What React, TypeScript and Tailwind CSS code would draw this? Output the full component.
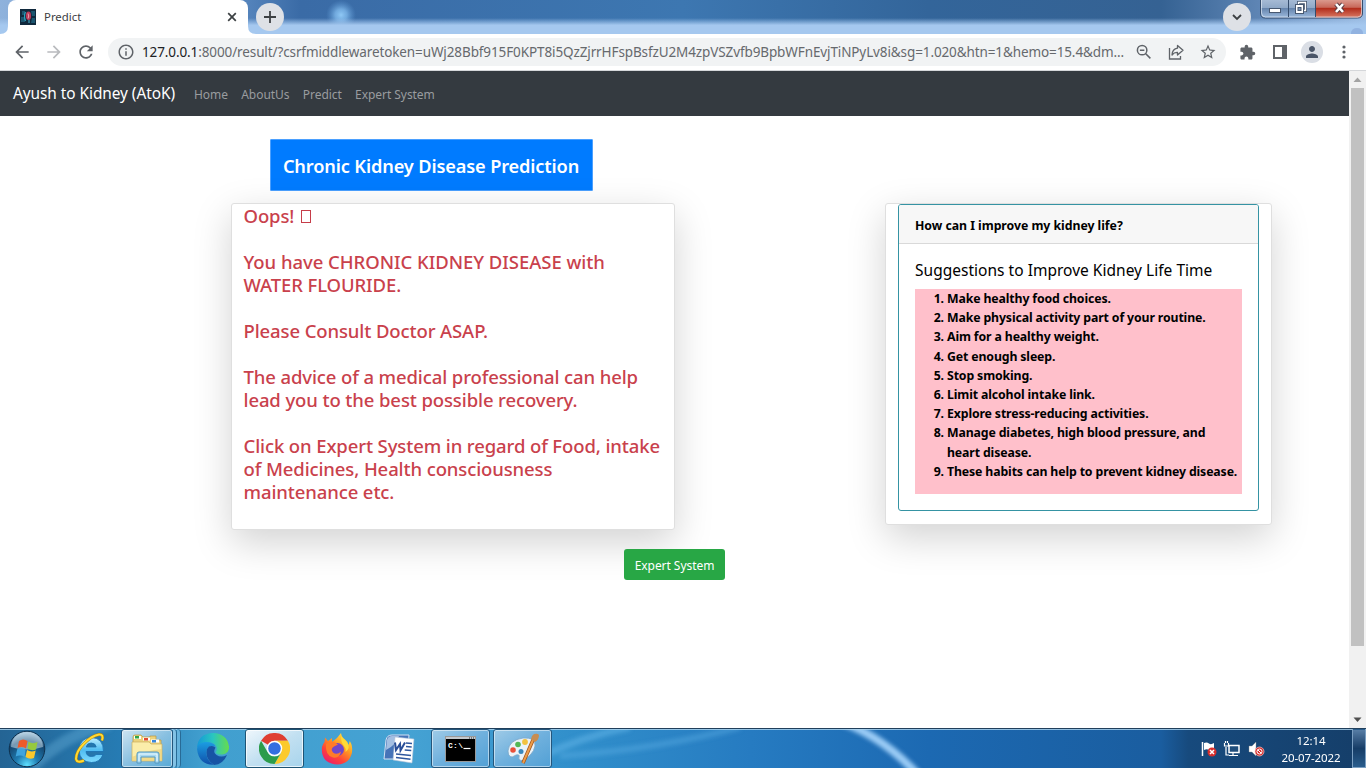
import type { ReactNode } from "react";

const suggestions = [
  "Make healthy food choices.",
  "Make physical activity part of your routine.",
  "Aim for a healthy weight.",
  "Get enough sleep.",
  "Stop smoking.",
  "Limit alcohol intake link.",
  "Explore stress-reducing activities.",
  "Manage diabetes, high blood pressure, and heart disease.",
  "These habits can help to prevent kidney disease.",
];

function GlassBackground() {
  return (
    <svg className="absolute inset-0 h-[34px] w-full" viewBox="0 0 1366 34" preserveAspectRatio="none">
      <defs>
        <linearGradient id="sky" x1="0" x2="1" y1="0" y2="0">
          <stop offset="0" stopColor="#8fb2dc" />
          <stop offset=".18" stopColor="#5584bc" />
          <stop offset=".22" stopColor="#3a6ba6" />
          <stop offset=".5" stopColor="#3d77b1" />
          <stop offset=".68" stopColor="#33659a" />
          <stop offset=".85" stopColor="#356293" />
          <stop offset=".93" stopColor="#6389b8" />
          <stop offset="1" stopColor="#9cbce2" />
        </linearGradient>
        <linearGradient id="haze" x1="0" x2="0" y1="0" y2="1">
          <stop offset=".53" stopColor="#a5c8ef" stopOpacity="0" />
          <stop offset=".74" stopColor="#a5c8ef" />
          <stop offset="1" stopColor="#a5c8ef" />
        </linearGradient>
        <radialGradient id="glow">
          <stop offset="0" stopColor="#8fc8f5" />
          <stop offset=".4" stopColor="#7db7ea" stopOpacity=".8" />
          <stop offset="1" stopColor="#5b95d0" stopOpacity="0" />
        </radialGradient>
      </defs>
      <rect width="1366" height="34" fill="url(#sky)" />
      <circle cx="341" cy="15" r="15" fill="url(#glow)" />
      <rect width="1366" height="34" fill="url(#haze)" />
      <ellipse cx="1357" cy="33" rx="6" ry="5" fill="#7291cb" opacity=".4" />
    </svg>
  );
}

function Favicon() {
  return (
    <svg width="16" height="16" viewBox="0 0 16 16">
      <rect width="16" height="16" fill="#10293d" />
      <path d="M2 2h3v4H2zM1 8h4v5H1zM11 2h4v5h-3zM12 9h3v5h-4z" fill="#1c5670" />
      <path d="M5.500 3Q3.500 7 5.500 12" fill="none" stroke="#2ba3c0" strokeWidth="1.200" />
      <ellipse cx="8.500" cy="6.800" rx="2.600" ry="4.300" fill="#b93a58" />
      <path d="M8 4.500q1.500 2.500 0 5" fill="none" stroke="#f0a0b0" />
      <path d="M9 11v3" stroke="#4bb6d2" />
    </svg>
  );
}

function WindowButtons() {
  return (
    <svg className="absolute top-0 right-[2px]" width="104" height="20" viewBox="0 0 104 20">
      <defs>
        <linearGradient id="wb" x1="0" x2="0" y1="0" y2="1">
          <stop offset="0" stopColor="#a9bdd6" />
          <stop offset=".45" stopColor="#90a9c8" />
          <stop offset=".5" stopColor="#6685ad" />
          <stop offset="1" stopColor="#9ebbde" />
        </linearGradient>
        <linearGradient id="cb" x1="0" x2="0" y1="0" y2="1">
          <stop offset="0" stopColor="#dda094" />
          <stop offset=".45" stopColor="#c8685a" />
          <stop offset=".5" stopColor="#b22c1b" />
          <stop offset="1" stopColor="#d87964" />
        </linearGradient>
      </defs>
      <path d="M.5-1v14q0 5 5 5h92q5 0 5-5v-14z" fill="url(#wb)" stroke="#354d6d" />
      <path d="M56-1h46v14q0 4.500-4.500 4.500H56z" fill="url(#cb)" />
      <path d="M1.500 0v13q0 4 4 4h92q4 0 4-4V0" fill="none" stroke="#e5edf6" opacity=".65" />
      <path d="M28.500 0v17M55.500 0v17" stroke="#354d6d" />
      <rect x="9.500" y="8.500" width="11" height="4" fill="#fff" stroke="#475870" />
      <path d="M38.500 2.500h7v8h-7z" fill="#7b94b7" stroke="#475870" strokeWidth="3" />
      <path d="M38.500 2.500h7v8h-7z" fill="none" stroke="#fff" strokeWidth="1.300" />
      <rect x="35.500" y="4.500" width="8" height="9" fill="#fff" stroke="#475870" />
      <rect x="38" y="7.500" width="3" height="3" fill="#7b94b7" stroke="#475870" />
      <path d="m76 4 7 8m0-8-7 8" stroke="#5b3c42" strokeWidth="4.500" />
      <path d="m76 4 7 8m0-8-7 8" stroke="#fff" strokeWidth="2.600" />
    </svg>
  );
}

function TabStrip() {
  return (
    <div className="relative flex h-[34px] shrink-0 overflow-hidden">
      <GlassBackground />
      <div className="relative ml-2 flex h-full w-[240px] items-center rounded-t-lg bg-white pr-[9px] pl-3">
        <Favicon />
        <span className="ml-2 flex-1 text-[11.4px] text-[#3c4043]">Predict</span>
        <svg width="12" height="12" viewBox="0 0 12 12" className="mr-[1px]">
          <path d="m2.200 2.200 7.600 7.600m0-7.600-7.600 7.600" stroke="#3c4043" strokeWidth="1.700" />
        </svg>
        <svg className="absolute bottom-0 -left-2" width="8" height="8"><path d="M8 0v8H0q8 0 8-8" fill="#fff" /></svg>
        <svg className="absolute -right-2 bottom-0" width="8" height="8"><path d="M0 0v8h8Q0 8 0 0" fill="#fff" /></svg>
      </div>
      <div className="relative mt-[3px] ml-2 grid size-7 place-items-center rounded-full bg-[#dee1e6]">
        <svg width="12" height="12"><path d="M6 0v12M0 6h12" stroke="#3c4043" strokeWidth="1.800" /></svg>
      </div>
      <div className="relative mt-[3px] mr-[115px] ml-auto grid size-7 place-items-center rounded-full bg-[#dee1e6]">
        <svg width="10" height="7"><path d="m1 1 4 4 4-4" fill="none" stroke="#3c4043" strokeWidth="1.800" /></svg>
      </div>
      <WindowButtons />
    </div>
  );
}

function MaterialIcon({ d, color = "#5f6368", size = 20 }: { d: string; color?: string; size?: number }) {
  return (
    <svg width={size} height={size} viewBox="0 0 24 24" className="shrink-0">
      <path d={d} fill={color} />
    </svg>
  );
}

function Toolbar() {
  return (
    <div className="flex h-[37px] shrink-0 items-center border-b border-[#d5d7da] bg-white pl-3">
      <MaterialIcon d="M20 11H7.830l5.590-5.590L12 4l-8 8 8 8 1.410-1.410L7.830 13H20v-2z" />
      <div className="ml-3 flex"><MaterialIcon color="#b9bbbe" d="m12 4-1.410 1.410L16.170 11H4v2h12.170l-5.580 5.590L12 20l8-8z" /></div>
      <div className="ml-3 flex"><MaterialIcon d="M17.650 6.350C16.200 4.900 14.210 4 12 4c-4.420 0-7.990 3.580-7.990 8s3.570 8 7.990 8c3.730 0 6.840-2.550 7.730-6h-2.080c-.82 2.330-3.040 4-5.650 4-3.310 0-6-2.690-6-6s2.690-6 6-6c1.660 0 3.140.69 4.220 1.780L13 11h7V4l-2.350 2.350z" /></div>
      <div className="ml-3 flex h-7 w-[1118px] items-center rounded-full bg-[#f1f3f4] pr-[9px] pl-[9px]">
        <MaterialIcon size={18} d="M11 7h2v2h-2zm0 4h2v6h-2zm1-9C6.480 2 2 6.480 2 12s4.480 10 10 10 10-4.480 10-10S17.520 2 12 2zm0 18c-4.410 0-8-3.590-8-8s3.590-8 8-8 8 3.590 8 8-3.590 8-8 8z" />
        <div className="ml-[7px] text-[13.500px] tracking-[-0.110px] whitespace-nowrap text-[#66696d]">
          <span className="text-[#202124]">127.0.0.1</span>:8000/result/?csrfmiddlewaretoken=uWj28Bbf915F0KPT8i5QzZjrrHFspBsfzU2M4zpVSZvfb9BpbWFnEvjTiNPyLv8i&amp;sg=1.020&amp;htn=1&amp;hemo=15.4&amp;dm...
        </div>
        <div className="ml-auto flex items-center gap-[14px]">
          <svg width="18" height="18" viewBox="0 0 24 24" fill="none" stroke="#5f6368" strokeWidth="2">
            <circle cx="9.500" cy="9.500" r="6.300" /><path d="M14 14l6.500 6.500M6.500 9.500h6" />
          </svg>
          <svg width="18" height="18" viewBox="0 0 18 18" fill="none" stroke="#5f6368" strokeWidth="1.300" className="overflow-visible">
            <path d="M2.500 5v11h11v-3" />
            <path d="M10.500 2.500 16 7.300l-5.500 4.700V9.400Q7 9.200 5 12q.3-6 5.500-6.800z" strokeLinejoin="round" />
          </svg>
          <MaterialIcon size={18} d="m22 9.240-7.190-.62L12 2 9.190 8.630 2 9.240l5.460 4.730L5.820 21 12 17.270 18.180 21l-1.630-7.030L22 9.240zM12 15.400l-3.760 2.270 1-4.280-3.320-2.880 4.380-.38L12 6.100l1.710 4.040 4.380.38-3.320 2.880 1 4.280L12 15.400z" />
        </div>
      </div>
      <div className="ml-[13px] flex"><MaterialIcon size={17} d="M20.500 11H19V7c0-1.100-.9-2-2-2h-4V3.500a2.500 2.500 0 0 0-5 0V5H4c-1.100 0-2 .9-2 2v3.800h1.500c1.500 0 2.700 1.200 2.700 2.700S5 16.200 3.500 16.200H2V20c0 1.100.9 2 2 2h3.800v-1.500c0-1.500 1.200-2.700 2.700-2.700s2.700 1.200 2.700 2.700V22H17c1.100 0 2-.9 2-2v-4h1.500a2.500 2.500 0 0 0 0-5z" /></div>
      <svg className="ml-[17px]" width="14" height="14"><path d="M1 1h12v12H1z" fill="none" stroke="#5f6368" strokeWidth="2" /><path d="M9 1h4v12H9z" fill="#5f6368" /></svg>
      <div className="ml-[14px] grid size-[22px] place-items-center rounded-full bg-[#dadee5]">
        <MaterialIcon size={18} color="#4a5568" d="M12 12c2.210 0 4-1.790 4-4s-1.790-4-4-4-4 1.790-4 4 1.790 4 4 4zm0 2c-2.670 0-8 1.340-8 4v2h16v-2c0-2.660-5.330-4-8-4z" />
      </div>
      <svg className="ml-[19px]" width="4" height="14" fill="#5f6368"><circle cx="2" cy="2" r="1.600" /><circle cx="2" cy="7" r="1.600" /><circle cx="2" cy="12" r="1.600" /></svg>
    </div>
  );
}

function Scrollbar() {
  return (
    <div className="flex w-[17px] flex-col items-center bg-[#f1f1f1]">
      <svg width="17" height="17"><path d="m4.500 11 4-4.500 4 4.500z" fill="#a3a3a3" /></svg>
      <div className="h-[558px] w-[13px] bg-[#c1c1c1]" />
      <svg className="mt-auto" width="17" height="17"><path d="m4.500 6.500 4 4.500 4-4.500z" fill="#505050" /></svg>
    </div>
  );
}

function ResultCard() {
  return (
    <div className="h-[327px] w-[444px] rounded-[3px] border border-[#dfdfdf] bg-white px-[11.500px] text-[18.500px] leading-[23px] font-medium tracking-[-0.110px] text-[#c9414c] shadow-[0_12.8px_38.4px_rgba(0,0,0,0.175)]">
      <p className="flex items-center">Oops!<span className="mt-px ml-[7px] h-[13px] w-[10px] border border-[#c63d49]" /></p>
      <p className="mt-[23px]"><span className="tracking-[-0.040px]">You have CHRONIC KIDNEY DISEASE with</span><br />WATER FLOURIDE.</p>
      <p className="mt-[23px]">Please Consult Doctor ASAP.</p>
      <p className="mt-[23px]">The advice of a medical professional can help<br />lead you to the best possible recovery.</p>
      <p className="mt-[23px]">Click on Expert System in regard of Food, intake<br />of Medicines, Health consciousness<br />maintenance etc.</p>
    </div>
  );
}

function SuggestionsCard() {
  return (
    <div className="h-[322px] w-[387px] rounded-[3px] border border-[#dfdfdf] bg-white px-[12px] shadow-[0_12.8px_38.4px_rgba(0,0,0,0.175)]">
      <div className="h-[307px] rounded-[3px] border border-[#3593a3] bg-white text-black">
        <div className="flex h-[39px] items-center rounded-t-[2px] border-b border-[#d9d9d9] bg-[#f7f7f7] px-4 pt-[4px] text-[12.300px] font-bold tracking-[-0.040px]">How can I improve my kidney life?</div>
        <div className="px-4 pt-[15px]">
          <h2 className="h-[30px] text-[15.500px] leading-[23px] tracking-[0.020px]">Suggestions to Improve Kidney Life Time</h2>
          <ol className="h-[205px] list-decimal bg-[#ffc0cb] pr-[3px] pl-8 text-[12.300px] leading-[19.200px] font-bold tracking-[-0.130px]">
            {suggestions.map((s) => <li key={s}>{s}</li>)}
          </ol>
        </div>
      </div>
    </div>
  );
}

function Page() {
  return (
    <div className="flex min-h-0 flex-1 bg-white">
      <div className="flex w-[1349px] flex-col">
        <nav className="flex h-[45px] items-center bg-[#343a40] px-[13px] text-[12px] tracking-[-0.050px] text-[#999c9f]">
          <span className="w-[181px] text-[15.400px] text-white">Ayush to Kidney (AtoK)</span>
          <div className="flex gap-[13.300px] pt-[3px]"><span>Home</span><span>AboutUs</span><span>Predict</span><span>Expert System</span></div>
        </nav>
        <div className="mt-[23px] ml-[269.500px] grid h-[52px] w-[323px] place-items-center rounded-[1px] border border-[#4ba0ff] bg-[#007bff] pt-[3px] text-[18.200px] font-semibold tracking-[-0.140px] whitespace-nowrap text-white">
          Chronic Kidney Disease Prediction
        </div>
        <div className="mt-3 ml-[231px] flex items-start gap-[210px]">
          <ResultCard />
          <SuggestionsCard />
        </div>
        <button className="relative mt-[19px] h-[31px] w-[101px] self-center rounded-[3px] bg-[#28a745] pt-[2px] text-[12px] tracking-[-0.050px] text-white">Expert System</button>
      </div>
      <Scrollbar />
    </div>
  );
}

function StartOrb() {
  return (
    <svg width="38" height="38" viewBox="0 0 38 38">
      <defs>
        <radialGradient id="orb" cx=".5" cy=".95" r=".9">
          <stop offset="0" stopColor="#5fe0ff" /><stop offset=".35" stopColor="#1f7cb2" /><stop offset=".75" stopColor="#15466f" /><stop offset="1" stopColor="#8fb3cd" />
        </radialGradient>
      </defs>
      <circle cx="19" cy="19" r="17.800" fill="url(#orb)" stroke="#0e304d" />
      <path d="M3 17a16 15 0 0 1 32 0q-16 5-32 0" fill="#d9ebf6" opacity=".5" />
      <path d="M11 11q4-3 8.500 0l-1.500 7.500q-4-2.500-8.500-.5z" fill="#ee5a2a" />
      <path d="M20.500 11.500q4 3 9 .5L28 19.500q-4 2-8.500-1z" fill="#96c93d" />
      <path d="M9.200 19.200q4-2 8.500.5l-1.200 7.300q-4-2.500-8.800-.5z" fill="#3ea4dd" />
      <path d="M19 20q4 2.500 8.700.5L26 28q-4 2-8.500-1z" fill="#fbc82c" />
    </svg>
  );
}

function InternetExplorer() {
  return (
    <svg width="34" height="34" viewBox="0 0 34 34">
      <defs><linearGradient id="ie" x1="0" x2="0" y1="0" y2="1"><stop offset="0" stopColor="#bdeeff" /><stop offset=".5" stopColor="#4fbcf1" /><stop offset="1" stopColor="#7edbff" /></linearGradient></defs>
      <path d="M30.500 19.500H13q.5 5 5.500 5 3.500 0 4.500-2h7Q27 30.500 18.500 30.500 6.500 30 6 18 6.500 6 18.500 5.500q12 .5 12 14zM13.200 15h10q-.7-4-5-4-4.200 0-5 4z" fill="url(#ie)" stroke="#1a6fae" strokeWidth=".8" />
      <path d="M29 8.500q2-6.500-3-6-7 1-15 9T3 27q1 4.500 8 1.500" fill="none" stroke="#b98500" strokeWidth="3" />
      <path d="M29 8.500q2-6.500-3-6-7 1-15 9T3 27q1 4.500 8 1.500" fill="none" stroke="#ffd934" strokeWidth="2" />
    </svg>
  );
}

function Explorer() {
  return (
    <svg width="34" height="32" viewBox="0 0 34 32">
      <path d="M3 4q0-2 2-2h6l2 2h7V3h6v4h5v20H3z" fill="#ecd27c" stroke="#b99844" strokeWidth=".7" />
      <rect x="4" y="3" width="7" height="3" fill="#fff" /><rect x="13" y="4.500" width="7" height="3" fill="#fff" /><rect x="21" y="6.500" width="8" height="3" fill="#fff" />
      <rect x="5" y="3" width="4" height="2.500" fill="#30a545" /><rect x="14" y="5" width="4" height="2.500" fill="#e24b32" /><rect x="22" y="7" width="4" height="2.500" fill="#3b87dc" />
      <path d="M2 9h17l2 2h11v17H2z" fill="#fbedaa" stroke="#cbb061" strokeWidth=".7" />
      <path d="M2 24q15-7 30-8v12H2z" fill="#edd27b" opacity=".7" />
      <path d="M7 30V21q0-2 2-2h18q2 0 2 2v9h-4v-6H11v6z" fill="#a8d9f1" stroke="#5497be" />
      <path d="M9 28v-7h18v7" fill="none" stroke="#edfaff" />
    </svg>
  );
}

function Edge() {
  return (
    <svg width="32" height="32" viewBox="0 0 32 32">
      <defs>
        <linearGradient id="e1" x1="0" x2="1"><stop offset="0" stopColor="#1598d8" /><stop offset=".5" stopColor="#2ac6c0" /><stop offset="1" stopColor="#67dc4b" /></linearGradient>
        <linearGradient id="e2" x1="0" x2="0" y1="0" y2="1"><stop offset="0" stopColor="#1b9de2" /><stop offset="1" stopColor="#104fa9" /></linearGradient>
      </defs>
      <path d="M0 15Q1 .5 16 0q14 .5 16 13.500.3 7-6.500 8-5.500.5-7-2 2-2.500 1-5.500Q17 8.500 9 9.500 3 10.500 0 15z" fill="url(#e1)" />
      <path d="M0 16q.5-6.500 8.500-7 8 0 10 4.500-7.500-2-9 5-1 8 7 13.300Q2 32 0 16z" fill="url(#e2)" />
      <path d="M12 13.500q4-1.500 6.500 1-3 5 1 7.500 4.500 3 10.500 0Q26 31.500 17 32 9 27 9.500 19q.5-4 2.500-5.500z" fill="#1754a5" />
    </svg>
  );
}

function Chrome() {
  return (
    <svg width="31" height="31" viewBox="0 0 48 48">
      <path d="M24 24 3.200 12A24 24 0 0 1 44.800 12H24z" fill="#df3e32" />
      <path d="M24 12h20.800A24 24 0 0 1 24 48l10.400-18z" fill="#fcca2c" />
      <path d="M3.200 12 13.600 30a12 12 0 0 0 20.800 0L24 48A24 24 0 0 1 3.200 12z" fill="#2c9c4b" />
      <circle cx="24" cy="24" r="12" fill="#fff" /><circle cx="24" cy="24" r="9.700" fill="#346fe0" />
    </svg>
  );
}

function Firefox() {
  return (
    <svg width="32" height="32" viewBox="0 0 32 32">
      <defs><linearGradient id="ff" x1=".9" x2=".2" y1="0" y2="1"><stop offset="0" stopColor="#fff14b" /><stop offset=".4" stopColor="#ff9c21" /><stop offset=".7" stopColor="#ff4438" /><stop offset="1" stopColor="#e81a72" /></linearGradient></defs>
      <path d="M20 0q.5 4 4 6.500 3 2.500 3.500 5.500l1.300-4Q32 13 31 19.500 28.500 31 16.500 31.500 3 31 1 19.500 0 13 3.500 9L4 4.500 7 8l4-3v4q5-3 9-9z" fill="url(#ff)" />
      <circle cx="16.500" cy="16.500" r="6.500" fill="#7048c9" />
      <path d="M5 11q4-4 9-1.500l3 2-4 2q-4 2.500-1 6 4 3 8-1-1 7-8 6-8-2-7-13.500z" fill="#ff7b29" />
      <path d="M20 3q0 7 3 10 2 2 1.500 6Q30 15 26 9z" fill="#ffda37" />
    </svg>
  );
}

function Word() {
  return (
    <svg width="32" height="32" viewBox="0 0 32 32">
      <path d="M3 7q1-5 6-5h17l-2 24H1z" fill="#4674b8" stroke="#d4e1f2" />
      <path d="M4 7q1-4 5-4h7q-3 9-13 14z" fill="#c4d8f0" opacity=".75" />
      <path d="m12 4 19 2-2 24-19-3z" fill="#fff" stroke="#adbfd6" strokeWidth=".6" />
      <path d="m23 10 6 .5M23 13.500l5.700.5M21.700 17l6.600.5M13 21l15 1.500M13 24.500l14.500 1.800" stroke="#2e579e" strokeWidth="1.600" />
      <path d="m12 9.500 1 7.500 4-6 .5 6.500L22 9.500" fill="none" stroke="#294e98" strokeWidth="2" />
    </svg>
  );
}

function Terminal() {
  return (
    <svg width="31" height="26" viewBox="0 0 31 26">
      <rect x=".5" y=".5" width="30" height="25" fill="#000" stroke="#999" />
      <path d="M1 2h29" stroke="#c4c9ce" strokeWidth="2" /><path d="M24 2h1m1 0h1m1 0h1" stroke="#333" />
      <text x="3" y="12" fill="#fff" fontFamily="Liberation Mono" fontSize="8" fontWeight="700" textLength="15">C:\</text>
      <path d="M18.500 12.500h7" stroke="#fff" strokeWidth="1.200" />
    </svg>
  );
}

function Paint() {
  return (
    <svg width="34" height="34" viewBox="0 0 34 34">
      <path d="M2 19Q3 8 17 6q13-1 12 8-1 5-4 8-6 7-10 6.500-3-.5-2-3.500t-3-2q-4 3-6 1.500-2-1.500-2-5.500z" fill="#eaf3f9" stroke="#7ca6c5" strokeWidth=".8" />
      <circle cx="7" cy="18" r="2.800" fill="#e9503b" /><circle cx="12" cy="12.500" r="2.800" fill="#54b856" /><circle cx="19" cy="10" r="2.900" fill="#f2c240" /><circle cx="15" cy="19.500" r="2.500" fill="#3988bd" />
      <path d="M27 8 17 31" stroke="#9e5218" strokeWidth="3.500" /><path d="M27 8 17 31" stroke="#ee9d4a" strokeWidth="2" />
      <path d="m25 7 4 3q4-2 4-7-1-2-5-1-3 2-3 5z" fill="#c88d52" />
    </svg>
  );
}

function TaskButton({ children, active = false }: { children: ReactNode; active?: boolean }) {
  return (
    <div className={active
      ? "grid h-[39px] w-[59px] place-items-center rounded-[3px] border border-[#1d5475] bg-linear-to-br from-[#eff7fc] via-[#c2e0f1] to-[#a7d4ec] inset-ring inset-ring-white/70"
      : "grid h-[39px] w-[59px] place-items-center rounded-[3px] border border-[#24567c] bg-linear-to-br from-[#9fcbe7] via-[#6fb0dd] to-[#51a0d5] inset-ring inset-ring-white/50"}>
      {children}
    </div>
  );
}

function Tray() {
  return (
    <div className="ml-auto flex h-full items-center text-center text-[11.500px] leading-[17px] tracking-[-0.100px] text-white">
      <svg width="66" height="16" viewBox="0 0 66 16">
        <path d="M2.500 1v14" stroke="#fff" strokeWidth="1.500" /><path d="M4 2q3-1 5 .5t5-.5v7q-3 1.500-5 0T4 9z" fill="#fff" />
        <circle cx="12" cy="11" r="4.500" fill="#d72f2d" /><path d="m10 9 4 4m0-4-4 4" stroke="#fff" strokeWidth="1.500" />
        <path d="M29 4.500h10v7H29z" fill="#204e7c" stroke="#fff" strokeWidth="1.500" /><path d="M33 12v2m-4 .5h9M26 6v8h3M24.500 2v3h4V2M25.500 0v2m2-2v2" fill="none" stroke="#fff" strokeWidth="1.200" />
        <path d="M49 5h3l4-4v14l-4-4h-3z" fill="#fff" stroke="#888" strokeWidth=".4" />
        <circle cx="59.500" cy="10.500" r="4.500" fill="#d72f2d" stroke="#f0cccc" strokeWidth=".7" /><circle cx="59.500" cy="10.500" r="2.500" fill="none" stroke="#fff" /><path d="m57.700 8.700 3.600 3.600" stroke="#fff" />
      </svg>
      <div className="mr-[11px] ml-[15px] w-[60px]">12:14<br />20-07-2022</div>
      <div className="h-full w-[14px] border border-[#7b9fc2] border-t-transparent bg-linear-to-b from-[#577da5] via-[#163d67] to-[#2a5d8d]" />
    </div>
  );
}

function Taskbar() {
  return (
    <div className="relative flex h-10 shrink-0 items-center overflow-hidden border-t border-[#213f5b] bg-[#2a81c3]">
      <svg className="absolute inset-0 h-full w-full" viewBox="0 0 1366 39" preserveAspectRatio="none">
        <defs>
          <linearGradient id="bar" x1="0" x2="1" y1="0" y2="0">
            <stop offset="0" stopColor="#246494" /><stop offset=".09" stopColor="#267cb4" /><stop offset=".15" stopColor="#419fcf" /><stop offset=".3" stopColor="#45a2d3" />
            <stop offset=".42" stopColor="#318fcb" /><stop offset=".55" stopColor="#267bc1" /><stop offset=".68" stopColor="#1c69b2" /><stop offset=".85" stopColor="#1a5d9f" />
            <stop offset=".87" stopColor="#174a7d" /><stop offset="1" stopColor="#153e69" />
          </linearGradient>
          <filter id="soft" x="-20%" y="-50%" width="140%" height="200%"><feGaussianBlur stdDeviation="2" /></filter>
        </defs>
        <rect width="1366" height="39" fill="url(#bar)" />
        <g fill="none" filter="url(#soft)">
          <path d="M842-7Q885 9 920 48" stroke="#9bccf6" strokeWidth="8" />
          <path d="M540 28Q580 8 630-2" stroke="#5eb1e5" strokeWidth="7" opacity=".6" />
          <path d="M560 27Q660 20 740-2" stroke="#5eb1e5" strokeWidth="6" opacity=".4" />
          <path d="M32 38Q65 5 110-5" stroke="#66afd9" strokeWidth="12" opacity=".4" />
        </g>
        <path d="M0 .5h1366" stroke="#b0d6ef" opacity=".8" />
      </svg>
      <div className="relative flex h-full w-full items-center">
        <div className="ml-2 flex"><StartOrb /></div>
        <div className="ml-[27px] flex"><InternetExplorer /></div>
        <div className="ml-[14px] flex h-[39px] w-[60px]">
          <div className="grid w-[52px] place-items-center rounded-[3px] border border-[#24567c] bg-linear-to-br from-[#cde4f1] via-[#89c0e1] to-[#58aad6] inset-ring inset-ring-white/50"><Explorer /></div>
          <div className="w-1 rounded-r border-r border-[#286b96] bg-[#82c2e5]" />
          <div className="w-1 rounded-r border-r border-[#286b96] bg-[#65b3dd]" />
        </div>
        <div className="ml-4 flex"><Edge /></div>
        <div className="ml-4"><TaskButton active><Chrome /></TaskButton></div>
        <div className="ml-[17px] flex"><Firefox /></div>
        <div className="ml-[30px] flex"><Word /></div>
        <div className="ml-4 flex gap-[3px]"><TaskButton><Terminal /></TaskButton><TaskButton><Paint /></TaskButton></div>
        <Tray />
      </div>
    </div>
  );
}

export default function App() {
  return (
    <div className="flex h-[768px] w-[1366px] flex-col overflow-hidden bg-white font-['Noto_Sans',sans-serif]">
      <TabStrip />
      <Toolbar />
      <Page />
      <Taskbar />
    </div>
  );
}
